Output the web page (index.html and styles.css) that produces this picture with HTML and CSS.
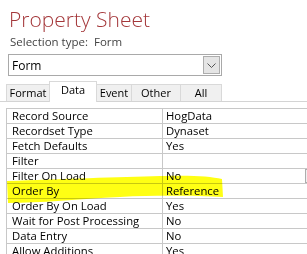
FILE: index.html
```html
<!DOCTYPE html>
<html lang="en">
<head>
  <meta charset="UTF-8">
  <title>Property Sheet</title>
  <link rel="stylesheet" href="styles.css">
</head>
<body>
  <h1 class="title">Property Sheet</h1>
  <div class="selection">Selection type:&nbsp;&nbsp;Form</div>

  <div class="combo">
    <span class="combo-text">Form</span>
    <span class="combo-btn">
      <svg width="9" height="5" viewBox="0 0 9 5"><path d="M0.5 0.5 L4.5 4.5 L8.5 0.5" fill="none" stroke="#555" stroke-width="1"/></svg>
    </span>
  </div>

  <div class="tabs">
    <div class="tab tab-format">Format</div>
    <div class="tab tab-data active">Data</div>
    <div class="tab tab-event">Event</div>
    <div class="tab tab-other">Other</div>
    <div class="tab tab-all">All</div>
  </div>

  <div class="sheet">
    <div class="row"><div class="label">Record Source</div><div class="value">HogData</div></div>
    <div class="row"><div class="label">Recordset Type</div><div class="value">Dynaset</div></div>
    <div class="row"><div class="label">Fetch Defaults</div><div class="value">Yes</div></div>
    <div class="row"><div class="label">Filter</div><div class="value"></div></div>
    <div class="row"><div class="label">Filter On Load</div><div class="value">No<span class="cell-btn"></span></div></div>
    <div class="row"><div class="label">Order By</div><div class="value">Reference</div></div>
    <div class="row"><div class="label">Order By On Load</div><div class="value">Yes</div></div>
    <div class="row"><div class="label">Wait for Post Processing</div><div class="value">No</div></div>
    <div class="row"><div class="label">Data Entry</div><div class="value">No</div></div>
    <div class="row"><div class="label">Allow Additions</div><div class="value">Yes</div></div>
  </div>

  <!-- highlighter mark over the Order By row -->
  <svg class="highlight" width="307" height="254" viewBox="0 0 307 254">
    <path d="M7 181 C60 179 120 177 160 176 C190 175 210 176 222 179 L223 197 C200 196 160 195 120 197 C80 199 40 203 8 203 Z" fill="#ffff00"/>
  </svg>
</body>
</html>
```

FILE: styles.css
```css
body {
  margin: 0;
  width: 307px;
  height: 254px;
  overflow: hidden;
  background-color: white;
  font-family: 'Open Sans', 'Noto Sans', sans-serif;
  position: relative;
}
.title {
  margin: 0;
  padding: 5px 0 0 9px;
  font-size: 21px;
  font-weight: 300;
  line-height: 28px;
  color: #a4373a;
}
.selection {
  margin-top: 2px;
  padding-left: 10px;
  font-size: 11.5px;
  line-height: 14px;
  color: #444;
}
.combo {
  box-sizing: border-box;
  display: flex;
  align-items: center;
  width: 214px;
  height: 22px;
  margin: 5px 0 0 8px;
  border: 1px solid #a9a9a9;
}
.combo-text {
  flex: 1;
  padding-left: 3px;
  font-size: 12px;
  color: #000;
}
.combo-btn {
  box-sizing: border-box;
  display: flex;
  align-items: center;
  justify-content: center;
  width: 17px;
  height: 18px;
  margin-right: 1px;
  background-color: #e5e5e5;
  border: 1px solid #adadad;
}
.tabs {
  display: flex;
  align-items: flex-end;
  height: 24px;
  padding-left: 6px;
  border-bottom: 1px solid #d4d4d4;
  margin-top: 1px;
}
.tab {
  box-sizing: border-box;
  height: 17px;
  margin-right: -1px;
  border: 1px solid #d9d9d9;
  border-bottom: none;
  background-color: #f0f0f0;
  font-size: 11px;
  line-height: 16px;
  text-align: center;
  color: #000;
}
.tab.active {
  height: 21px;
  margin-bottom: -1px;
  background-color: white;
  line-height: 15px;
  position: relative;
}
.tab-format { width: 44px; }
.tab-data { width: 48px; }
.tab-event { width: 36px; }
.tab-other { width: 50px; }
.tab-all { width: 42px; }
.sheet {
  width: 312px;
  margin: 6px 0 0 6px;
  border-top: 1px solid #c8c8c8;
  border-left: 1px solid #c8c8c8;
}
.row {
  display: flex;
  box-sizing: border-box;
  height: 15px;
  border-bottom: 1px solid #c8c8c8;
  font-size: 11.3px;
  line-height: 14px;
  color: #000;
}
.label {
  width: 155px;
  padding-left: 5px;
  box-sizing: border-box;
  white-space: nowrap;
}
.value {
  flex: 1;
  display: flex;
  padding-left: 3px;
  border-left: 1px solid #c8c8c8;
}
.cell-btn {
  box-sizing: border-box;
  width: 14px;
  height: 14px;
  margin-left: auto;
  border: 1px solid #adadad;
  background-color: #f0f0f0;
}
.highlight {
  position: absolute;
  top: 0;
  left: 0;
  pointer-events: none;
  mix-blend-mode: multiply;
  opacity: 0.92;
}
```
